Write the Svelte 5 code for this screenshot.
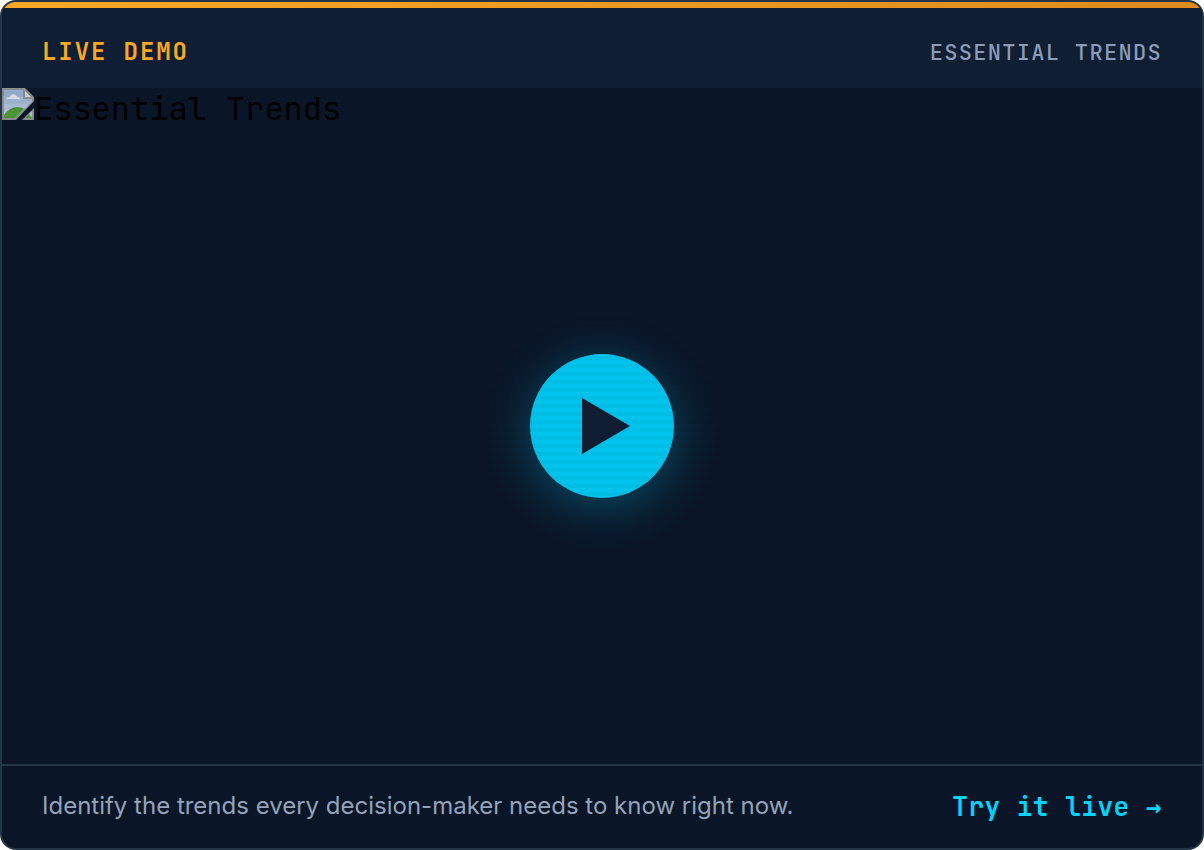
<script lang="ts">
  const title = 'Essential Trends';
  let playing = $state(false);
</script>

<article class="card">
  <div class="accent"></div>
  <header class="head">
    <span class="badge">Live demo</span>
    <h2 class="name">{title}</h2>
  </header>

  <div class="media">
    <div class="poster">
      <svg class="missing" viewBox="0 0 32 32" aria-hidden="true">
        <defs>
          <linearGradient id="sky" x1="0" y1="0" x2="0" y2="1">
            <stop offset="0" stop-color="#92a8cc" />
            <stop offset="1" stop-color="#b9c6da" />
          </linearGradient>
        </defs>
        <path d="M0 0H23L32 9V13L14 32H0Z" fill="#8c8d8f" />
        <path d="M2 2H21V11H30V14L13 30H2Z" fill="url(#sky)" />
        <path d="M5 11Q5 9 8 9Q9 6 12 6Q14 6 15 9Q18 9 18 11Z" fill="#d7dce3" />
        <path d="M2 30V27Q8 19 15 19Q20 19 22 21L13 30Z" fill="#4b9838" />
        <path d="M23 3L29 9H23Z" fill="#d0d2d4" />
        <path d="M32 20V32H20Z" fill="#8c8d8f" />
        <path d="M30 23V30H23Z" fill="#a9b7d2" />
        <path d="M27 26L30 30H23Z" fill="#4b9838" />
      </svg>
      <span class="alt">{title}</span>
    </div>
    <button class="play" aria-label="Play demo" aria-pressed={playing} onclick={() => (playing = !playing)}>
      <svg viewBox="0 0 48 56" aria-hidden="true"><path d="M0 0L48 28L0 56Z" /></svg>
    </button>
    <div class="scanlines"></div>
  </div>

  <footer class="foot">
    <p>Identify the trends every decision-maker needs to know right now.</p>
    <a href="#live">Try it live <span class="arrow">→</span></a>
  </footer>
</article>

<style>
  :global(body) {
    margin: 0;
    background: #fff;
  }
  .card {
    box-sizing: border-box;
    min-height: 100vh;
    display: flex;
    flex-direction: column;
    overflow: hidden;
    border: 2px solid #243447;
    border-radius: 16px;
    background: #0a1628;
    font-family: 'JetBrains Mono', 'DejaVu Sans Mono', monospace;
  }
  .accent {
    height: 6px;
    background: linear-gradient(135deg, #f9a826, #e08a1e);
  }
  .head {
    display: flex;
    align-items: baseline;
    justify-content: space-between;
    gap: 24px;
    min-height: 80px;
    padding: 28px 40px 0;
    box-sizing: border-box;
    background: #0f1e33;
    text-transform: uppercase;
  }
  .badge {
    color: #f9a826;
    font-size: 24px;
    font-weight: 700;
    letter-spacing: 0.08em;
  }
  .name {
    margin: 0;
    color: #8b9bb8;
    font-size: 22px;
    font-weight: 500;
    letter-spacing: 0.06em;
  }
  .media {
    position: relative;
    flex: 1;
    display: grid;
    place-items: center;
    padding: 64px 0;
  }
  .poster {
    position: absolute;
    top: 0;
    left: 0;
    display: flex;
    color: #000;
    font-size: 32px;
    line-height: 42px;
  }
  .missing {
    width: 32px;
    height: 32px;
  }
  .play {
    display: grid;
    place-items: center;
    width: 144px;
    height: 144px;
    padding: 0 0 0 8px;
    border: 0;
    border-radius: 50%;
    background: #00c3ec;
    box-shadow: 0 8px 48px rgba(0, 212, 255, 0.3);
    cursor: pointer;
  }
  .play svg {
    width: 48px;
    height: 56px;
    fill: #0f1e33;
  }
  .scanlines {
    position: absolute;
    inset: 0;
    pointer-events: none;
    background: repeating-linear-gradient(0deg, transparent 0 4px, rgba(0, 0, 0, 0.03) 4px 8px);
  }
  .foot {
    display: flex;
    align-items: center;
    justify-content: space-between;
    gap: 24px;
    min-height: 82px;
    padding: 0 40px;
    border-top: 2px solid #243447;
  }
  .foot p {
    margin: 0;
    padding-bottom: 4px;
    color: #94a3b8;
    font-family: Inter, sans-serif;
    font-size: 24px;
  }
  .foot a {
    padding-bottom: 2px;
    color: #00d4ff;
    font-size: 26px;
    font-weight: 700;
    letter-spacing: 0.02em;
    text-decoration: none;
    white-space: nowrap;
  }
  .arrow {
    font-family: 'DejaVu Sans Mono', monospace;
    line-height: 1;
  }
</style>
